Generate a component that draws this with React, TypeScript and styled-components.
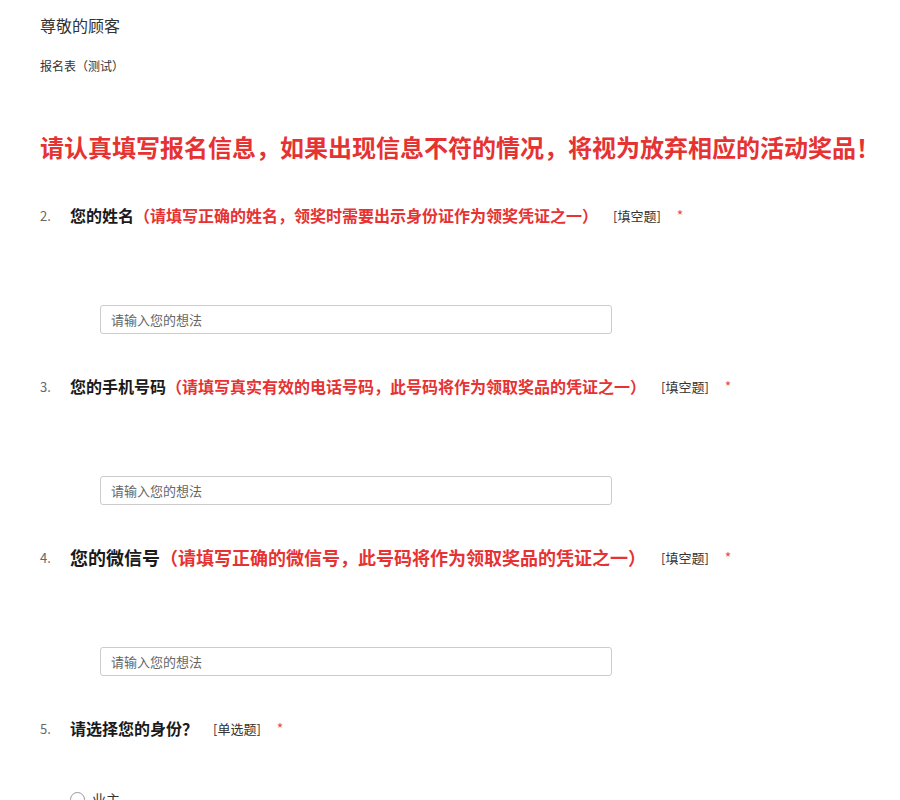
import React from 'react';
import styled, { createGlobalStyle } from 'styled-components';

const GlobalStyle = createGlobalStyle`
  html, body {
    margin: 0;
    padding: 0;
    background: #fff;
  }
  body {
    font-family: "Noto Sans CJK SC", "Noto Sans", "Liberation Sans", sans-serif;
    color: #333;
  }
`;

interface Question {
  no: number;
  title: string;
  hint?: string;
  kind: string;
  type: 'text' | 'radio';
  size?: number; // title font size, one question is larger
  options?: string[];
}

const questions: Question[] = [
  {
    no: 2,
    title: '您的姓名',
    hint: '（请填写正确的姓名，领奖时需要出示身份证作为领奖凭证之一）',
    kind: '[填空题]',
    type: 'text',
  },
  {
    no: 3,
    title: '您的手机号码',
    hint: '（请填写真实有效的电话号码，此号码将作为领取奖品的凭证之一）',
    kind: '[填空题]',
    type: 'text',
  },
  {
    no: 4,
    title: '您的微信号',
    hint: '（请填写正确的微信号，此号码将作为领取奖品的凭证之一）',
    kind: '[填空题]',
    type: 'text',
    size: 18,
  },
  {
    no: 5,
    title: '请选择您的身份？',
    kind: '[单选题]',
    type: 'radio',
    options: ['业主', '非业主'],
  },
];

const Page = styled.div`
  padding: 15px 20px 0 40px;
  height: 800px;
  overflow: hidden;
  box-sizing: border-box;
`;

const Greeting = styled.div`
  font-size: 16px;
  line-height: 20px;
  color: #333;
`;

const SubTitle = styled.div`
  margin-top: 23px;
  font-size: 12px;
  line-height: 16px;
  color: #333;
`;

const Notice = styled.h1`
  margin: 56px 0 0;
  font-size: 24px;
  line-height: 34px;
  font-weight: bold;
  color: #e63232;
  white-space: nowrap;
`;

const Block = styled.div<{ $first?: boolean }>`
  margin-top: ${(p) => (p.$first ? '39px' : '40px')};
`;

const TitleRow = styled.div`
  display: flex;
  align-items: center;
  height: 24px;
  white-space: nowrap;
`;

const Num = styled.span`
  width: 30px;
  font-size: 13px;
  color: #666;
`;

const Title = styled.span<{ $size: number }>`
  font-size: ${(p) => p.$size}px;
  font-weight: bold;
  color: #1a1a1a;
`;

const Hint = styled.span<{ $size: number }>`
  font-size: ${(p) => p.$size}px;
  font-weight: bold;
  color: #e63232;
`;

const Kind = styled.span`
  margin-left: 15px;
  font-size: 13px;
  color: #333;
`;

const Star = styled.span`
  margin-left: 16px;
  font-size: 14px;
  color: #f04848;
`;

const Field = styled.input`
  display: block;
  margin: 78px 0 0 60px;
  width: 512px;
  height: 29px;
  box-sizing: border-box;
  padding: 0 10px;
  border: 1px solid #ccc;
  border-radius: 3px;
  font-family: inherit;
  font-size: 13px;
  color: #333;
  outline: none;

  &::placeholder {
    color: #666;
  }
`;

const Options = styled.div`
  margin: 50px 0 0 30px;
  display: flex;
  flex-direction: column;
  gap: 20px;
`;

const Option = styled.label`
  display: flex;
  align-items: center;
  gap: 7px;
  font-size: 14px;
  color: #333;
  line-height: 18px;
`;

const Circle = styled.span`
  width: 15px;
  height: 15px;
  box-sizing: border-box;
  border: 1px solid #999;
  border-radius: 50%;
  background: #fff;
`;

export default function App() {
  return (
    <>
      <GlobalStyle />
      <Page>
        <Greeting>尊敬的顾客</Greeting>
        <SubTitle>报名表（测试）</SubTitle>
        <Notice>请认真填写报名信息，如果出现信息不符的情况，将视为放弃相应的活动奖品！</Notice>
        {questions.map((q, i) => (
          <Block key={q.no} $first={i === 0}>
            <TitleRow>
              <Num>{q.no}.</Num>
              <Title $size={q.size ?? 16}>{q.title}</Title>
              {q.hint && <Hint $size={q.size ?? 16}>{q.hint}</Hint>}
              <Kind>{q.kind}</Kind>
              <Star>*</Star>
            </TitleRow>
            {q.type === 'text' ? (
              <Field placeholder="请输入您的想法" />
            ) : (
              <Options>
                {q.options?.map((o) => (
                  <Option key={o}>
                    <Circle />
                    {o}
                  </Option>
                ))}
              </Options>
            )}
          </Block>
        ))}
      </Page>
    </>
  );
}
